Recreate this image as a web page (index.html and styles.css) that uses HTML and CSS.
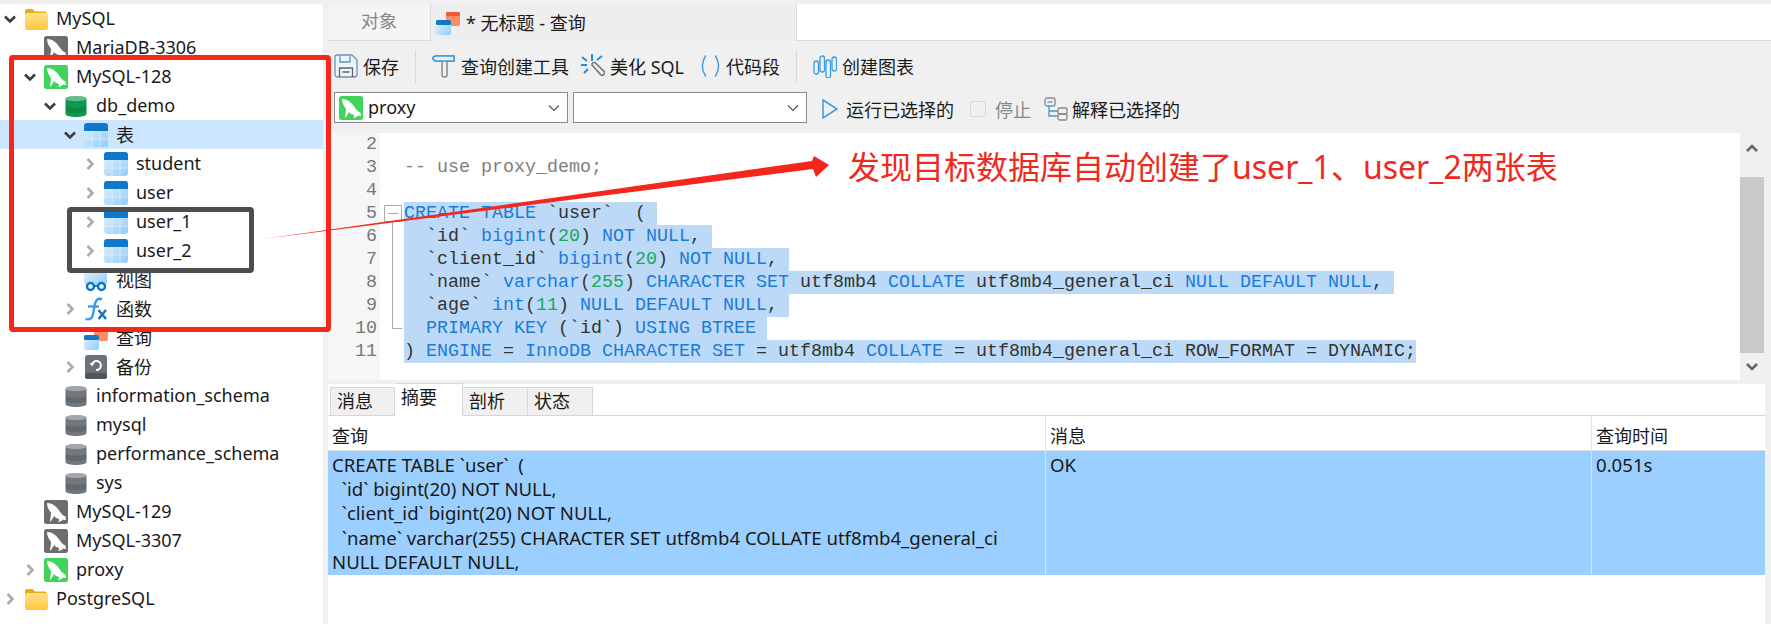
FILE: index.html
```html
<!DOCTYPE html>
<html lang="zh">
<head>
<meta charset="utf-8">
<title>无标题 - 查询</title>
<link rel="stylesheet" href="styles.css">
</head>
<body>
<svg class="defs" width="0" height="0" aria-hidden="true">
  <defs>
    <linearGradient id="gFolder" x1="0" y1="0" x2="0" y2="1"><stop offset="0" stop-color="#ffe38a"/><stop offset="1" stop-color="#ffc43f"/></linearGradient>
    <linearGradient id="gCell" x1="0" y1="0" x2="1" y2="1"><stop offset="0" stop-color="#e8f4fe"/><stop offset="1" stop-color="#8fcbfb"/></linearGradient>
    <symbol id="i-folder" viewBox="0 0 24 24"><path d="M1 7V4.500Q1 2 3.500 2H8.500L11 4.500H20.500Q23 4.500 23 7V9H1Z" fill="#eda90f"/><rect x="1" y="6" width="23" height="17" rx="2.500" fill="url(#gFolder)"/></symbol>
    <symbol id="i-dolphin" viewBox="0 0 24 24"><rect width="24" height="24" rx="2.500" fill="currentColor"/><path d="M3 3C6 3 9 4 11 6C14 8 15 11 17 13C18 15 20 16 21.500 16.500L22 20C21 20 20 20 19 19.500C18 21 16 22 14 22C15 21 15 20 15 19C13 18.500 11 17.500 10 16C9 18 8 20 6 22C6 19 7 16 7 13C5 10 3 7 3 3Z" fill="#fff"/></symbol>
    <symbol id="i-db" viewBox="0 0 24 24"><path d="M1.500 4.500C1.500 1 22.500 1 22.500 4.500V20C22.500 24 1.500 24 1.500 20Z" fill="currentColor"/><path d="M1.500 4.500C1.500 1 22.500 1 22.500 4.500C22.500 8 1.500 8 1.500 4.500Z" fill="#fff" opacity=".35"/><path d="M1.500 11C1.500 14.500 22.500 14.500 22.500 11V16.500C22.500 20 1.500 20 1.500 16.500Z" fill="#000" opacity=".12"/></symbol>
    <symbol id="i-table" viewBox="0 0 24 24"><rect width="24" height="24" rx="3" fill="url(#gCell)"/><path d="M0 8V3Q0 0 3 0H21Q24 0 24 3V8Z" fill="#0f78cc"/><path d="M8 8V24M16 8V24M0 16H24" stroke="#fff" stroke-opacity=".4" stroke-width="1"/></symbol>
    <symbol id="i-view" viewBox="0 0 24 24"><rect x="0" y="0" width="23" height="17" rx="3" fill="url(#gCell)"/><circle cx="6.500" cy="18.500" r="3.500" fill="#fff" stroke="#1077c6" stroke-width="2.500"/><circle cx="17.500" cy="18.500" r="3.500" fill="#fff" stroke="#1077c6" stroke-width="2.500"/><path d="M10 18H14" stroke="#1077c6" stroke-width="2"/></symbol>
    <symbol id="i-fx" viewBox="0 0 24 24"><path d="M18 2.500C13 0 11.500 4 10.500 9L9 17C8.500 21.500 6 23 1.500 22" fill="none" stroke="#2e9be6" stroke-width="2.300"/><path d="M4 9.500H15" stroke="#2e9be6" stroke-width="2.300"/><path d="M14.500 13L22 22M22 13L14.500 22" stroke="#1077c6" stroke-width="2.500"/></symbol>
    <symbol id="i-query" viewBox="0 0 24 24"><rect x="10" y="1" width="14" height="14" rx="2" fill="#ff8a66"/><rect x="10" y="1" width="14" height="4" rx="1.500" fill="#ef5a35"/><rect x="0" y="9" width="15" height="15" rx="2" fill="url(#gCell)"/><rect x="0" y="9" width="15" height="5" rx="1.500" fill="#0f78cc"/></symbol>
    <symbol id="i-backup" viewBox="0 0 24 24"><rect x="1" width="22" height="24" rx="3" fill="#6b7278"/><rect x="1" y="18" width="22" height="6" rx="2.500" fill="#4f555a"/><path d="M8 9.500A4.500 4.500 0 1 1 12 15" fill="none" stroke="#fff" stroke-width="2"/><path d="M5.500 8H10.500L8 11.500Z" fill="#fff"/></symbol>
    <symbol id="i-dn" viewBox="0 0 14 14"><path d="M2 4.500L7 9.500L12 4.500" fill="none" stroke="#3c3c3c" stroke-width="2.600"/></symbol>
    <symbol id="i-rt" viewBox="0 0 14 14"><path d="M4.500 2L9.500 7L4.500 12" fill="none" stroke="#ababab" stroke-width="2.600"/></symbol>
    <symbol id="i-sel" viewBox="0 0 12 8"><path d="M1 1.500L6 6.500L11 1.500" fill="none" stroke="#555" stroke-width="1.200"/></symbol>
  </defs>
</svg>

<div class="app">
  <nav class="tree">
    <div class="row l0"><svg class="chev"><use href="#i-dn"/></svg><svg class="ico"><use href="#i-folder"/></svg><span>MySQL</span></div>
    <div class="row l1"><span class="chev"></span><svg class="ico off"><use href="#i-dolphin"/></svg><span>MariaDB-3306</span></div>
    <div class="row l1"><svg class="chev"><use href="#i-dn"/></svg><svg class="ico on"><use href="#i-dolphin"/></svg><span>MySQL-128</span></div>
    <div class="row l2"><svg class="chev"><use href="#i-dn"/></svg><svg class="ico dbg"><use href="#i-db"/></svg><span>db_demo</span></div>
    <div class="row l3 sel"><svg class="chev"><use href="#i-dn"/></svg><svg class="ico"><use href="#i-table"/></svg><span>表</span></div>
    <div class="row l4"><svg class="chev"><use href="#i-rt"/></svg><svg class="ico"><use href="#i-table"/></svg><span>student</span></div>
    <div class="row l4"><svg class="chev"><use href="#i-rt"/></svg><svg class="ico"><use href="#i-table"/></svg><span>user</span></div>
    <div class="row l4"><svg class="chev"><use href="#i-rt"/></svg><svg class="ico"><use href="#i-table"/></svg><span>user_1</span></div>
    <div class="row l4"><svg class="chev"><use href="#i-rt"/></svg><svg class="ico"><use href="#i-table"/></svg><span>user_2</span></div>
    <div class="row l3"><span class="chev"></span><svg class="ico"><use href="#i-view"/></svg><span>视图</span></div>
    <div class="row l3"><svg class="chev"><use href="#i-rt"/></svg><svg class="ico"><use href="#i-fx"/></svg><span>函数</span></div>
    <div class="row l3"><span class="chev"></span><svg class="ico"><use href="#i-query"/></svg><span>查询</span></div>
    <div class="row l3"><svg class="chev"><use href="#i-rt"/></svg><svg class="ico"><use href="#i-backup"/></svg><span>备份</span></div>
    <div class="row l2"><span class="chev"></span><svg class="ico dbo"><use href="#i-db"/></svg><span>information_schema</span></div>
    <div class="row l2"><span class="chev"></span><svg class="ico dbo"><use href="#i-db"/></svg><span>mysql</span></div>
    <div class="row l2"><span class="chev"></span><svg class="ico dbo"><use href="#i-db"/></svg><span>performance_schema</span></div>
    <div class="row l2"><span class="chev"></span><svg class="ico dbo"><use href="#i-db"/></svg><span>sys</span></div>
    <div class="row l1"><span class="chev"></span><svg class="ico off"><use href="#i-dolphin"/></svg><span>MySQL-129</span></div>
    <div class="row l1"><span class="chev"></span><svg class="ico off"><use href="#i-dolphin"/></svg><span>MySQL-3307</span></div>
    <div class="row l1"><svg class="chev"><use href="#i-rt"/></svg><svg class="ico on"><use href="#i-dolphin"/></svg><span>proxy</span></div>
    <div class="row l0"><svg class="chev"><use href="#i-rt"/></svg><svg class="ico"><use href="#i-folder"/></svg><span>PostgreSQL</span></div>
  </nav>

  <main class="main">
    <div class="tabs">
      <div class="tab-obj">对象</div>
      <div class="tab-query"><svg class="ico"><use href="#i-query"/></svg><span>* 无标题 - 查询</span></div>
      <div class="tab-rest"></div>
    </div>

    <div class="toolbar">
      <div class="tool"><svg class="ico" viewBox="0 0 24 24" fill="none" stroke="#4a6a85" stroke-width="1.300"><path d="M3 1H18L23 6V20Q23 23 20 23H4Q1 23 1 20V3Q1 1 3 1Z" fill="#eaf5fd" stroke="#6d93b3"/><path d="M6 1.500V8H16V1.500" stroke="#6d93b3"/><path d="M5.500 23V14H18.500V23M8.500 18H15.500" stroke="#666"/></svg><span>保存</span></div>
      <i class="sep"></i>
      <div class="tool"><svg class="ico" viewBox="0 0 24 24" fill="none" stroke-width="1.500"><path d="M1 5Q1 2 4 2H22V7H15V21Q15 23 12.500 23Q10 23 10 21V7H3Z" stroke="#888"/><path d="M1 5Q1 2 4 2H22V7H3Z" stroke="#3b9be0" fill="#e8f4fd"/></svg><span>查询创建工具</span></div>
      <div class="tool beautify"><svg class="ico" viewBox="0 0 24 24" fill="none" stroke-width="2"><path d="M11 0V7M1 3L6 7M21 2L16 6M0 11H6M3 19L7 15" stroke="#1e8fe0"/><path d="M11 11L20 21A2.500 2.500 0 0 0 23.500 18L14 8.500Q11 8 11 11Z" stroke="#777" stroke-width="1.600"/></svg><span>美化 SQL</span></div>
      <div class="tool snippet"><svg class="ico small" viewBox="0 0 22 24" fill="none" stroke="#3b9be0" stroke-width="1.500"><path d="M6 1Q-1 12 6 23M16 1Q23 12 16 23"/></svg><span>代码段</span></div>
      <i class="sep"></i>
      <div class="tool"><svg class="ico" viewBox="0 0 24 24" fill="none" stroke="#3b9be0" stroke-width="1.300"><rect x="1" y="7" width="4.500" height="13" rx="2.200"/><rect x="7" y="2" width="4.500" height="16" rx="2.200"/><rect x="13" y="6" width="4.500" height="18" rx="2.200"/><rect x="19" y="3" width="4.500" height="14" rx="2.200"/></svg><span>创建图表</span></div>
    </div>

    <div class="selrow">
      <div class="select"><svg class="ico on"><use href="#i-dolphin"/></svg><span>proxy</span><svg class="drop"><use href="#i-sel"/></svg></div>
      <div class="select second"><svg class="drop"><use href="#i-sel"/></svg></div>
      <div class="tool run"><svg class="ico thin" viewBox="0 0 16 20" fill="none" stroke="#3b9be0" stroke-width="1.500"><path d="M1 1L15 10L1 19Z"/></svg><span>运行已选择的</span></div>
      <div class="tool stop"><i class="check"></i><span>停止</span></div>
      <div class="tool explain"><svg class="ico" viewBox="0 0 24 24" fill="none" stroke-width="1.300"><rect x="1" y="1" width="10" height="8" rx="2" stroke="#888"/><path d="M3.500 5H8.500" stroke="#3b9be0"/><path d="M5 9V19H14M5 14H14" stroke="#3b9be0"/><rect x="14" y="11" width="9" height="6" rx="1.500" stroke="#888"/><rect x="14" y="17" width="9" height="6" rx="1.500" stroke="#888"/></svg><span>解释已选择的</span></div>
    </div>

    <section class="editor">
      <div class="gutter">
        <div>2</div><div>3</div><div>4</div><div>5</div><div>6</div><div>7</div><div>8</div><div>9</div><div>10</div><div>11</div>
      </div>
      <svg class="fold" viewBox="0 0 24 230" fill="none" stroke="#aaa"><path d="M4.500 72.500H21.500V88.500H4.500ZM8 80.500H18M12.500 89V195.500H22"/></svg>
      <div class="code">
        <div class="ln"></div>
        <div class="ln cm">-- use proxy_demo;</div>
        <div class="ln"></div>
        <div class="ln"><span class="hl"><b>CREATE TABLE</b> `user`  ( </span></div>
        <div class="ln"><span class="hl">  `id` <b>bigint</b>(<u>20</u>) <b>NOT NULL</b>, </span></div>
        <div class="ln"><span class="hl">  `client_id` <b>bigint</b>(<u>20</u>) <b>NOT NULL</b>, </span></div>
        <div class="ln"><span class="hl">  `name` <b>varchar</b>(<u>255</u>) <b>CHARACTER SET</b> utf8mb4 <b>COLLATE</b> utf8mb4_general_ci <b>NULL DEFAULT NULL</b>, </span></div>
        <div class="ln"><span class="hl">  `age` <b>int</b>(<u>11</u>) <b>NULL DEFAULT NULL</b>, </span></div>
        <div class="ln"><span class="hl">  <b>PRIMARY KEY</b> (`id`) <b>USING BTREE</b> </span></div>
        <div class="ln"><span class="hl">) <b>ENGINE</b> = <b>InnoDB CHARACTER SET</b> = utf8mb4 <b>COLLATE</b> = utf8mb4_general_ci ROW_FORMAT = DYNAMIC;</span></div>
      </div>
      <div class="vscroll">
        <svg class="arrow" viewBox="0 0 14 14"><path d="M2 10L7 5L12 10" fill="none" stroke="#666" stroke-width="2.600"/></svg>
        <div class="thumb"></div>
        <svg class="arrow" viewBox="0 0 14 14"><path d="M2 4L7 9L12 4" fill="none" stroke="#666" stroke-width="2.600"/></svg>
      </div>
    </section>

    <section class="panel">
      <div class="ptabs">
        <div class="ptab">消息</div>
        <div class="ptab active">摘要</div>
        <div class="ptab">剖析</div>
        <div class="ptab">状态</div>
      </div>
      <div class="grid">
        <div class="th">查询</div><div class="th">消息</div><div class="th">查询时间</div>
        <div class="td">CREATE TABLE `user`  (
  `id` bigint(20) NOT NULL,
  `client_id` bigint(20) NOT NULL,
  `name` varchar(255) CHARACTER SET utf8mb4 COLLATE utf8mb4_general_ci
NULL DEFAULT NULL,</div><div class="td">OK</div><div class="td">0.051s</div>
      </div>
    </section>
  </main>
</div>

<div class="mark mark-red"></div>
<div class="mark mark-dark"></div>
<svg class="mark-arrow" viewBox="0 0 1771 624"><polygon points="263,239 812,161 814,156 829,165 816,177 813,169" fill="#f5261c"/></svg>
<div class="note">发现目标数据库自动创建了user_1、user_2两张表</div>
</body>
</html>
```

FILE: styles.css
```css
* { box-sizing: border-box; }
html, body { margin: 0; height: 624px; overflow: hidden; }
body {
  position: relative;
  background: #f0f0f0;
  color: #1a1a1a;
  font-family: "Noto Sans", "Noto Sans CJK SC", sans-serif;
  font-size: 18px;
}
.defs { position: absolute; }
.app { display: flex; height: 624px; padding-top: 4px; }

/* tree */
.tree { width: 323px; flex: none; background: #fff; overflow: hidden; }
.row { display: flex; align-items: center; height: 29px; white-space: nowrap; }
.row span:last-child { margin-bottom: 2px; }
.row.sel { background: #cce6ff; }
.l0 { padding-left: 3px; }
.l1 { padding-left: 23px; }
.l2 { padding-left: 43px; }
.l3 { padding-left: 63px; }
.l4 { padding-left: 83px; }
.chev { width: 14px; height: 14px; margin-right: 7px; flex: none; }
.row .ico { margin-right: 8px; }
.ico { width: 24px; height: 24px; flex: none; display: block; }
.on { color: #40d45a; }
.off { color: #6d6d6d; }
.dbg { color: #0e9a4e; }
.dbo { color: #70777d; }

/* main */
.main { flex: 1; min-width: 0; margin-left: 5px; display: flex; flex-direction: column; }
.tabs { display: flex; height: 37px; flex: none; }
.tab-obj {
  width: 103px; background: #f5f5f5; color: #888; text-align: center; line-height: 34px;
  border-right: 1px solid #dcdcdc; border-bottom: 1px solid #dcdcdc;
}
.tab-query { width: 365px; display: flex; align-items: center; gap: 6px; padding-left: 5px; background: #eee; }
.tab-query span { margin-bottom: 2px; }
.tab-rest { flex: 1; background: #fff; border-left: 1px solid #dcdcdc; border-bottom: 1px solid #dcdcdc; }

.toolbar { height: 47px; flex: none; display: flex; align-items: center; gap: 14px; padding: 3px 0 0 6px; }
.tool { display: flex; align-items: center; gap: 5px; white-space: nowrap; }
.beautify { margin-left: -2px; }
.snippet { margin-left: 2px; }
.ico.small { width: 21px; }
.sep { width: 1px; height: 33px; background: #d9d9d9; margin: 0 2px; }

.selrow { height: 45px; flex: none; display: flex; align-items: flex-start; padding: 4px 0 0 6px; gap: 5px; }
.select {
  width: 234px; height: 31px; display: flex; align-items: center; gap: 5px; padding: 0 6px 0 4px;
  background: #fff; border: 1px solid #8a8a8a;
}
.select span { margin-bottom: 2px; }
.select .ico { width: 24px; height: 24px; }
.drop { width: 12px; height: 8px; margin-left: auto; margin-right: 1px; }
.run { margin: 1px 0 0 10px; height: 31px; }
.ico.thin { width: 16px; height: 20px; margin-right: 3px; }
.stop { margin: 1px 0 0 11px; height: 31px; color: #888; gap: 9px; }
.check { width: 16px; height: 16px; border: 1px solid #e3d3d1; border-radius: 2px; }
.explain { margin: 1px 0 0 8px; height: 31px; gap: 4px; }

/* editor */
.editor {
  height: 247px; flex: none; display: flex; margin-right: 7px; background: #fff; overflow: hidden;
  font-family: "Liberation Mono", monospace; font-size: 18.330px; line-height: 23px;
}
.gutter { width: 52px; flex: none; background: #f6f6f6; color: #777; text-align: right; padding-right: 3px; }
.fold { width: 24px; height: 230px; flex: none; }
.code { flex: 1; min-width: 0; color: #333; }
.ln { height: 23px; white-space: pre; }
.cm { color: #808080; }
.hl { display: inline-block; height: 23px; background: #bcdaf8; vertical-align: top; }
.hl b { font-weight: 400; color: #1b7bd8; }
.hl u { text-decoration: none; color: #17a85a; }
.vscroll { width: 24px; flex: none; background: #f0f0f0; display: flex; flex-direction: column; align-items: center; }
.arrow { width: 14px; height: 14px; flex: none; margin: 8px 0 16px; }
.vscroll .arrow:last-child { margin: 7px 0 0; }
.thumb { width: 24px; height: 176px; flex: none; margin-top: 6px; background: #cacaca; }

/* result panel */
.panel { flex: 1; margin: 4px 6px 0 0; background: #fff; display: flex; flex-direction: column; }
.ptabs { display: flex; align-items: flex-end; height: 32px; flex: none; padding-left: 2px; border-bottom: 1px solid #d6d6d6; }
.ptab {
  width: 65px; height: 29px; margin-bottom: -1px; padding-left: 6px; background: #f0f0f0; border: 1px solid #d6d6d6; border-left: 0;
  line-height: 27px;
}
.ptab:first-child { border-left: 1px solid #d6d6d6; }
.ptab.active { height: 33px; width: 68px; background: #fff; border-bottom: 0; line-height: 27px; }
.grid { display: grid; grid-template-columns: 718px 546px 173px; grid-template-rows: 35px 124px; }
.th { padding: 0 4px; height: 35px; border-right: 1px solid #e6e6e6; overflow: hidden; border-bottom: 1px solid #dfdfdf; line-height: 41px; }
.td { background: #9acfff; padding: 2px 4px 0; font-size: 18.600px; line-height: 24.200px; white-space: pre-wrap; border-right: 1px solid #cfe6fb; }
.th:nth-child(3), .td:last-child { border-right: 0; }

/* annotations drawn over the screenshot */
.mark { position: absolute; pointer-events: none; border-radius: 4px; }
.mark-red { left: 9px; top: 55px; width: 322px; height: 277px; border: 5px solid #f5261c; }
.mark-dark { left: 67px; top: 207px; width: 187px; height: 66px; border: 5px solid #4d4d4d; }
.mark-arrow { position: absolute; left: 0; top: 0; width: 1771px; height: 624px; pointer-events: none; }
.note { position: absolute; left: 848px; top: 145px; font-size: 32px; line-height: 44px; color: #ee2a20; white-space: nowrap; }
```
